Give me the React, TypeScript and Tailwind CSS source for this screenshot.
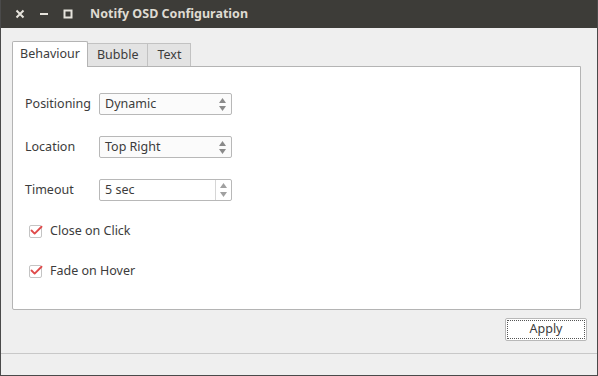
import { Check } from 'lucide-react';

const font = { fontFamily: '"Noto Sans", "Open Sans", "DejaVu Sans", sans-serif' };

const Arrows = () => (
  <div className="flex flex-col items-center gap-[3px] pr-[5px]">
    <svg width="7" height="5" viewBox="0 0 7 5"><path d="M3.5 0 L7 5 L0 5 Z" fill="#8a8a8a" /></svg>
    <svg width="7" height="5" viewBox="0 0 7 5"><path d="M0 0 L7 0 L3.5 5 Z" fill="#8a8a8a" /></svg>
  </div>
);

const Combo = ({ value }: { value: string }) => (
  <div className="flex h-[22px] w-[133px] items-center justify-between rounded-[2px] border border-[#b8b8b8] bg-[#fbfbfb] pl-[5px]">
    <span>{value}</span>
    <Arrows />
  </div>
);

const Spin = ({ value }: { value: string }) => (
  <div className="flex h-[22px] w-[133px] items-center rounded-[2px] border border-[#b8b8b8] bg-white">
    <span className="flex-1 pl-[5px]">{value}</span>
    <div className="flex h-full w-[16px] flex-col items-center justify-center gap-[4px] border-l border-[#d6d6d6]">
      <svg width="7" height="5" viewBox="0 0 7 5"><path d="M3.5 0 L7 5 L0 5 Z" fill="#a0a0a0" /></svg>
      <svg width="7" height="5" viewBox="0 0 7 5"><path d="M0 0 L7 0 L3.5 5 Z" fill="#a0a0a0" /></svg>
    </div>
  </div>
);

const Row = ({ label, children }: { label: string; children: React.ReactNode }) => (
  <div className="flex h-[22px] items-center">
    <span className="w-[74px]">{label}</span>
    {children}
  </div>
);

const CheckRow = ({ label }: { label: string }) => (
  <div className="flex h-[16px] items-center gap-[8px] pl-[4px]">
    <div className="relative h-[13px] w-[13px] rounded-[2px] border border-[#c4c4c4] bg-white">
      <Check className="absolute -left-[1px] -top-[3px] text-[#df4a4a]" size={15} strokeWidth={3} />
    </div>
    <span>{label}</span>
  </div>
);

export default function App() {
  return (
    <div className="flex h-[376px] w-[598px] flex-col border-x border-b border-[#4a4a4a] bg-[#efefef] text-[12.5px] text-[#3c3c3c]" style={font}>
      <div className="flex h-[28px] shrink-0 items-center bg-[#3d3c38] text-[#dfdbd2]">
        <div className="flex w-[89px] items-center pl-[14px]">
          <svg width="10" height="10" viewBox="0 0 10 10" className="mr-[14px]">
            <path d="M1.5 1.5 L8.5 8.5 M8.5 1.5 L1.5 8.5" stroke="#e6e3dc" strokeWidth="2" />
          </svg>
          <svg width="10" height="10" viewBox="0 0 10 10" className="mr-[14px]">
            <path d="M1 5 H9" stroke="#e6e3dc" strokeWidth="2" />
          </svg>
          <svg width="10" height="10" viewBox="0 0 10 10">
            <rect x="1.5" y="1.5" width="7" height="7" fill="none" stroke="#e6e3dc" strokeWidth="2" />
          </svg>
        </div>
        <span className="text-[12.5px] font-bold">Notify OSD Configuration</span>
      </div>

      <div className="flex flex-1 flex-col px-[11px] pt-[12px]">
        <div className="flex h-[26px] items-end">
          <div className="z-10 -mb-px flex h-[26px] items-center rounded-t-[2px] border border-b-0 border-[#b4b4b4] bg-white px-[7px]">
            Behaviour
          </div>
          <div className="flex h-[23px] items-center border border-b-0 border-l-0 border-[#c2c2c2] bg-[#e3e3e3] px-[9px]">Bubble</div>
          <div className="flex h-[23px] items-center border border-b-0 border-l-0 border-[#c2c2c2] bg-[#e3e3e3] px-[9px]">Text</div>
        </div>
        <div className="mr-[5px] flex h-[244px] flex-col gap-[21px] rounded-b-[2px] border border-[#b4b4b4] bg-white pl-[12px] pt-[26px]">
          <Row label="Positioning"><Combo value="Dynamic" /></Row>
          <Row label="Location"><Combo value="Top Right" /></Row>
          <Row label="Timeout"><Spin value="5 sec" /></Row>
          <div className="flex flex-col gap-[24px] pt-[1px]">
            <CheckRow label="Close on Click" />
            <CheckRow label="Fade on Hover" />
          </div>
        </div>
        <div className="-mr-[1px] flex justify-end pt-[8px]">
          <div className="flex h-[23px] w-[82px] items-center justify-center rounded-[2px] border border-[#b8b8b8] bg-white">
            <div className="flex h-[19px] w-[78px] items-center justify-center border border-dotted border-[#555]">Apply</div>
          </div>
        </div>
      </div>
      <div className="h-[22px] shrink-0 border-t border-[#c8c8c8] bg-[#efefef]" />
    </div>
  );
}
